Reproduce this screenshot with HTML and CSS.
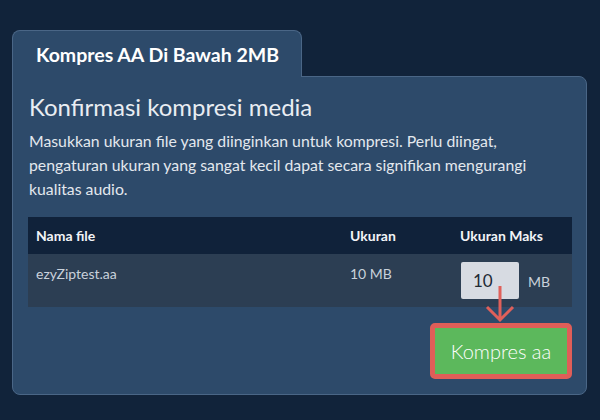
FILE: index.html
```html
<!DOCTYPE html>
<html lang="id">
<head>
<meta charset="utf-8">
<title>Kompres AA</title>
<link rel="stylesheet" href="styles.css">
</head>
<body>
<div class="wrap">
  <div class="tab">Kompres AA Di Bawah 2MB</div>
  <div class="panel">
    <h2 class="title">Konfirmasi kompresi media</h2>
    <p class="desc">Masukkan ukuran file yang diinginkan untuk kompresi. Perlu diingat, pengaturan ukuran yang sangat kecil dapat secara signifikan mengurangi kualitas audio.</p>
    <table class="files">
      <thead>
        <tr><th class="c1">Nama file</th><th class="c2">Ukuran</th><th class="c3">Ukuran Maks</th></tr>
      </thead>
      <tbody>
        <tr>
          <td class="c1">ezyZiptest.aa</td>
          <td class="c2">10 MB</td>
          <td class="c3"><div class="maxcell"><input class="size" type="text" value="10"><span class="unit">MB</span></div></td>
        </tr>
      </tbody>
    </table>
    <div class="actions">
      <div class="btnwrap">
        <svg class="arrow" width="30" height="38" viewBox="0 0 30 38"><path d="M15 1 V35 M2 22 L15 35 L28 22" fill="none" stroke="#e0605a" stroke-width="3"/></svg>
        <button class="go">Kompres aa</button>
      </div>
    </div>
  </div>
</div>
</body>
</html>
```
FILE: styles.css
```css
html, body { margin: 0; padding: 0; }
body {
  background: #11233a;
  font-family: Lato, "Noto Sans", sans-serif;
  width: 600px;
  height: 420px;
  overflow: hidden;
}
.wrap { padding: 30px 13px 0 12px; }
.tab {
  position: relative;
  z-index: 2;
  box-sizing: border-box;
  width: 290px;
  height: 47px;
  margin-bottom: -1px;
  background: #2d4a6a;
  border: 1px solid #4a6686;
  border-bottom: none;
  border-radius: 8px 8px 0 0;
  color: #ffffff;
  font-weight: 700;
  font-size: 19.5px;
  line-height: 24px;
  padding: 12px 0 0 23px;
}
.panel {
  box-sizing: border-box;
  width: 575px;
  background: #2d4a6a;
  border: 1px solid #4a6686;
  border-radius: 0 8px 8px 8px;
  padding: 15px 14px 15px 16px;
}
.title {
  margin: 0;
  font-weight: 400;
  font-size: 24px;
  line-height: 30px;
  color: #e9edf2;
}
.desc {
  margin: 7px 0 16px;
  font-size: 15.8px;
  line-height: 24px;
  color: #e3e8ee;
}
.files {
  width: 544px;
  margin-left: -1px;
  border-collapse: collapse;
  font-size: 14px;
  line-height: 17px;
}
.files th {
  background: #10223a;
  color: #f2f4f7;
  font-weight: 700;
  text-align: left;
  padding: 10px 8px;
}
.files td {
  background: #2c3e53;
  color: #c9d1db;
  vertical-align: top;
  padding: 11px 8px 0;
}
.files .c1 { width: 298px; }
.files .c2 { width: 94px; }
.files td.c3 { padding: 8px 8px 8px 9px; }
.maxcell { display: flex; align-items: center; gap: 9px; }
.size {
  box-sizing: border-box;
  width: 58px;
  height: 37px;
  border: none;
  border-radius: 2px;
  background: #d7dbe2;
  color: #222a35;
  font-family: Lato, sans-serif;
  font-size: 17px;
  padding: 0 0 0 12px;
  margin: 0;
}
.unit { color: #c9d1db; font-size: 14px; margin-top: 1px; }
.actions {
  display: flex;
  justify-content: flex-end;
  margin-top: 16px;
}
.btnwrap { position: relative; }
.arrow {
  position: absolute;
  left: 55px;
  top: -38px;
}
.go {
  display: block;
  box-sizing: border-box;
  width: 142px;
  height: 56px;
  background: #5cb85c;
  border: 5px solid #df5e58;
  border-radius: 5px;
  color: #ffffff;
  font-family: Lato, sans-serif;
  font-size: 20px;
  font-weight: 300;
  padding: 0;
}
```
